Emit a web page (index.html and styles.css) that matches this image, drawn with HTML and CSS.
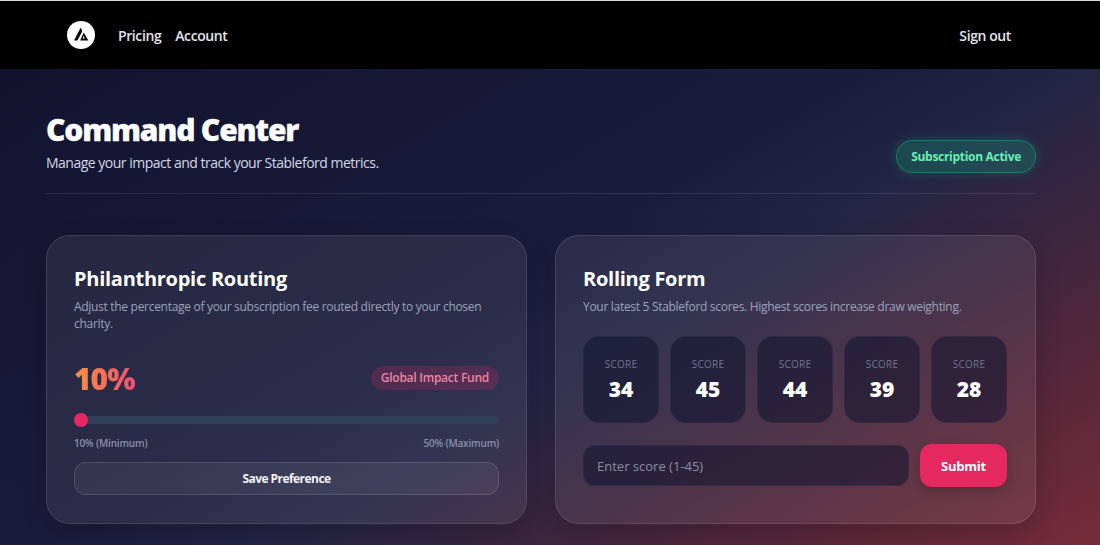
FILE: index.html
```html
<!DOCTYPE html>
<html lang="en">
<head>
    <meta charset="UTF-8">
    <meta name="viewport" content="width=device-width, initial-scale=1.0">
    <title>Command Center</title>
    <link rel="stylesheet" href="styles.css">
</head>
<body>
    <nav class="navbar">
        <div class="nav-left">
            <svg class="logo" width="28" height="28" viewBox="0 0 28 28">
                <circle cx="14" cy="14" r="14" fill="#fff"/>
                <path d="M13.6 6.8 L15.4 10 L10.4 19.4 L7 19.4 Z" fill="#000"/>
                <path d="M16.6 11.6 L21.4 19.4 L13.2 19.4 Z M16.6 15 L15.6 17.4 L18 17.4 Z" fill="#000" fill-rule="evenodd"/>
            </svg>
            <a class="nav-link" href="#">Pricing</a>
            <a class="nav-link" href="#">Account</a>
        </div>
        <a class="nav-link" href="#">Sign out</a>
    </nav>

    <main class="page">
        <header class="page-header">
            <div>
                <h1>Command Center</h1>
                <p>Manage your impact and track your Stableford metrics.</p>
            </div>
            <span class="status-pill">Subscription Active</span>
        </header>

        <div class="cards">
            <section class="card">
                <h2>Philanthropic Routing</h2>
                <p class="card-desc">Adjust the percentage of your subscription fee routed directly to your chosen charity.</p>

                <div class="percent-row">
                    <span class="percent">10%</span>
                    <span class="charity-pill">Global Impact Fund</span>
                </div>

                <input class="slider" type="range" min="10" max="50" value="10">
                <div class="slider-labels">
                    <span>10% (Minimum)</span>
                    <span>50% (Maximum)</span>
                </div>

                <button class="save-btn">Save Preference</button>
            </section>

            <section class="card">
                <h2>Rolling Form</h2>
                <p class="card-desc">Your latest 5 Stableford scores. Highest scores increase draw weighting.</p>

                <div class="scores">
                    <div class="score"><span class="score-label">SCORE</span><span class="score-value">34</span></div>
                    <div class="score"><span class="score-label">SCORE</span><span class="score-value">45</span></div>
                    <div class="score"><span class="score-label">SCORE</span><span class="score-value">44</span></div>
                    <div class="score"><span class="score-label">SCORE</span><span class="score-value">39</span></div>
                    <div class="score"><span class="score-label">SCORE</span><span class="score-value">28</span></div>
                </div>

                <form class="score-form">
                    <input class="score-input" type="number" placeholder="Enter score (1-45)">
                    <button class="submit-btn" type="button">Submit</button>
                </form>
            </section>
        </div>
    </main>
</body>
</html>
```

FILE: styles.css
```css
* {
    box-sizing: border-box;
}
body {
    margin: 0;
    min-height: 545px;
    border-top: 1px solid #d8d8d8;
    font-family: "Open Sans", "Noto Sans", Arial, sans-serif;
    color: #fff;
    background-color: #000;
}
.navbar {
    height: 68px;
    padding: 0 89px 0 67px;
    display: flex;
    align-items: center;
    justify-content: space-between;
    background-color: #000;
}
.nav-left {
    display: flex;
    align-items: center;
    gap: 14px;
}
.logo {
    margin-right: 9px;
}
.nav-link {
    font-size: 14px;
    font-weight: 600;
    letter-spacing: -0.4px;
    color: #e2e4ee;
    text-decoration: none;
}
.page {
    height: 476px;
    padding: 46px 64px 0 46px;
    background: linear-gradient(150deg, #11132f 0%, #1a1c3c 45%, #232545 57%, #382540 68%, #5a2739 85%, #762c3a 100%);
}
.page-header {
    height: 79px;
    display: flex;
    align-items: flex-end;
    justify-content: space-between;
    padding-bottom: 20px;
    border-bottom: 1px solid rgba(255, 255, 255, 0.1);
}
.page-header h1 {
    margin: 0;
    font-size: 30px;
    line-height: 32px;
    font-weight: 800;
    letter-spacing: -1.2px;
    -webkit-text-stroke: 0.3px #fff;
}
.page-header p {
    margin: 7px 0 0;
    font-size: 14px;
    line-height: 20px;
    letter-spacing: -0.5px;
    color: #d5d8e6;
}
.status-pill {
    padding: 7px 14px;
    font-size: 12px;
    line-height: 17px;
    font-weight: 700;
    letter-spacing: -0.3px;
    color: #6af0b4;
    background: rgba(16, 185, 129, 0.25);
    border: 1px solid rgba(16, 185, 129, 0.45);
    border-radius: 999px;
    box-shadow: 0 0 12px rgba(16, 185, 129, 0.28);
}
.cards {
    margin-top: 41px;
    display: grid;
    grid-template-columns: 1fr 1fr;
    gap: 28px;
}
.card {
    height: 289px;
    padding: 28px 27px;
    background: rgba(255, 255, 255, 0.07);
    border: 1px solid rgba(255, 255, 255, 0.11);
    border-radius: 24px;
    box-shadow: 0 8px 24px rgba(0, 0, 0, 0.18);
}
.card h2 {
    margin: 0;
    font-size: 20px;
    line-height: 30px;
    font-weight: 700;
    letter-spacing: -0.27px;
}
.card-desc {
    margin: 4px 0 0;
    font-size: 12px;
    line-height: 17px;
    letter-spacing: -0.3px;
    color: #9ea3bb;
}
.percent-row {
    margin-top: 24px;
    height: 44px;
    display: flex;
    align-items: center;
    justify-content: space-between;
}
.percent {
    font-size: 30px;
    font-weight: 800;
    letter-spacing: -1px;
    background: linear-gradient(90deg, #fb923c, #ec4e75);
    -webkit-background-clip: text;
    background-clip: text;
    color: transparent;
}
.charity-pill {
    padding: 3px 10px;
    font-size: 12px;
    line-height: 18px;
    font-weight: 600;
    letter-spacing: -0.25px;
    color: #ea86a5;
    background: rgba(233, 38, 98, 0.2);
    border-radius: 999px;
}
.slider {
    display: block;
    width: 100%;
    height: 14px;
    margin: 13px 0 0;
    -webkit-appearance: none;
    appearance: none;
    background: transparent;
}
.slider::-webkit-slider-runnable-track {
    height: 8px;
    background: #323f58;
    border-radius: 4px;
}
.slider::-webkit-slider-thumb {
    -webkit-appearance: none;
    width: 14px;
    height: 14px;
    margin-top: -3px;
    background: #e9265f;
    border-radius: 50%;
}
.slider-labels {
    margin-top: 9px;
    display: flex;
    justify-content: space-between;
    font-size: 10px;
    line-height: 14px;
    font-weight: 600;
    letter-spacing: -0.17px;
    color: #8b90a8;
}
.save-btn {
    display: block;
    width: 100%;
    height: 33px;
    margin-top: 12px;
    font-family: inherit;
    font-size: 12px;
    font-weight: 700;
    letter-spacing: -0.55px;
    color: #f2f2f6;
    background: rgba(255, 255, 255, 0.06);
    border: 1px solid rgba(255, 255, 255, 0.12);
    border-radius: 12px;
}
.scores {
    margin-top: 21px;
    display: flex;
    gap: 11px;
}
.score {
    width: 76px;
    height: 87px;
    padding-top: 20px;
    display: flex;
    flex-direction: column;
    align-items: center;
    background: rgba(15, 18, 45, 0.55);
    border: 1px solid rgba(255, 255, 255, 0.04);
    border-radius: 16px;
}
.score-label {
    font-size: 10px;
    line-height: 14px;
    letter-spacing: 0.2px;
    color: #72748f;
}
.score-value {
    margin-top: 5px;
    font-size: 21px;
    line-height: 26px;
    font-weight: 800;
    color: #fff;
}
.score-form {
    margin-top: 21px;
    margin-right: 1px;
    display: flex;
    align-items: center;
    gap: 11px;
}
.score-input {
    flex: 1;
    min-width: 0;
    height: 41px;
    padding: 0 13px;
    font-family: inherit;
    font-size: 13px;
    color: #fff;
    background: rgba(15, 18, 45, 0.55);
    border: 1px solid rgba(255, 255, 255, 0.04);
    border-radius: 12px;
}
.score-input::placeholder {
    color: #8f8da1;
}
.submit-btn {
    width: 87px;
    height: 43px;
    font-family: inherit;
    font-size: 13px;
    font-weight: 700;
    letter-spacing: -0.2px;
    color: #fff;
    background: #e5285f;
    border: none;
    border-radius: 12px;
    box-shadow: 0 4px 12px rgba(0, 0, 0, 0.2);
}
```
